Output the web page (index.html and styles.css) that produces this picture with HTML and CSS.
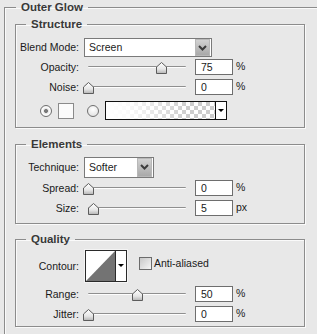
FILE: index.html
```html
<!DOCTYPE html>
<html lang="en">
<head>
  <meta charset="UTF-8" />
  <title>Outer Glow</title>
  <link rel="stylesheet" href="styles.css">
</head>
<body>
  <svg class="defs" width="0" height="0">
    <defs>
      <linearGradient id="thumbFill" x1="0" y1="0" x2="0" y2="1">
        <stop offset="0" stop-color="#ffffff" />
        <stop offset="0.6" stop-color="#e6e6e6" />
        <stop offset="1" stop-color="#b4b4b4" />
      </linearGradient>
      <symbol id="thumb" viewBox="0 0 11 12">
        <polygon points="0.5,5 5.5,0.5 10.5,5 10.5,11.5 0.5,11.5" fill="url(#thumbFill)" stroke="#5c5c5c" stroke-width="1" stroke-linejoin="round" />
      </symbol>
      <symbol id="chevron" viewBox="0 0 15 17">
        <path d="M4 7 L7.5 10.5 L11 7" fill="none" stroke="#3c3c3c" stroke-width="2" />
      </symbol>
    </defs>
  </svg>

  <fieldset class="panel">
    <legend>Outer Glow</legend>

    <fieldset class="group structure">
      <legend>Structure</legend>
      <div class="row first">
        <span class="label">Blend Mode:</span>
        <div class="select blend">
          <span class="select-text">Screen</span>
          <span class="select-btn"><svg width="15" height="17"><use href="#chevron" /></svg></span>
        </div>
      </div>
      <div class="row">
        <span class="label">Opacity:</span>
        <div class="slider">
          <div class="track"></div>
          <svg class="thumb" width="11" height="12" style="left: 73px"><use href="#thumb" /></svg>
        </div>
        <div class="num">75</div>
        <span class="unit">%</span>
      </div>
      <div class="row">
        <span class="label">Noise:</span>
        <div class="slider">
          <div class="track"></div>
          <svg class="thumb" width="11" height="12" style="left: 0px"><use href="#thumb" /></svg>
        </div>
        <div class="num">0</div>
        <span class="unit">%</span>
      </div>
      <div class="row colors">
        <span class="radio checked"></span>
        <span class="swatch"></span>
        <span class="radio second"></span>
        <div class="gradient">
          <span class="gradient-fill"></span>
          <span class="drop"></span>
        </div>
      </div>
    </fieldset>

    <fieldset class="group elements">
      <legend>Elements</legend>
      <div class="row first tall">
        <span class="label">Technique:</span>
        <div class="select technique">
          <span class="select-text">Softer</span>
          <span class="select-btn"><svg width="15" height="17"><use href="#chevron" /></svg></span>
        </div>
      </div>
      <div class="row">
        <span class="label">Spread:</span>
        <div class="slider">
          <div class="track"></div>
          <svg class="thumb" width="11" height="12" style="left: 0px"><use href="#thumb" /></svg>
        </div>
        <div class="num">0</div>
        <span class="unit">%</span>
      </div>
      <div class="row">
        <span class="label">Size:</span>
        <div class="slider">
          <div class="track"></div>
          <svg class="thumb" width="11" height="12" style="left: 5px"><use href="#thumb" /></svg>
        </div>
        <div class="num">5</div>
        <span class="unit">px</span>
      </div>
    </fieldset>

    <fieldset class="group quality">
      <legend>Quality</legend>
      <div class="row contour-row">
        <span class="label">Contour:</span>
        <div class="contour">
          <svg class="curve" width="29" height="30" viewBox="0 0 29 30">
            <rect width="29" height="30" fill="#fff" />
            <polygon points="0,30 29,0 29,30" fill="#737373" />
          </svg>
          <span class="drop"></span>
        </div>
        <label class="check"><span class="box"></span>Anti-aliased</label>
      </div>
      <div class="row">
        <span class="label">Range:</span>
        <div class="slider">
          <div class="track"></div>
          <svg class="thumb" width="11" height="12" style="left: 49px"><use href="#thumb" /></svg>
        </div>
        <div class="num">50</div>
        <span class="unit">%</span>
      </div>
      <div class="row">
        <span class="label">Jitter:</span>
        <div class="slider">
          <div class="track"></div>
          <svg class="thumb" width="11" height="12" style="left: 0px"><use href="#thumb" /></svg>
        </div>
        <div class="num">0</div>
        <span class="unit">%</span>
      </div>
    </fieldset>
  </fieldset>
</body>
</html>
```

FILE: styles.css
```css
html, body {
  margin: 0;
  overflow: hidden;
}
body {
  width: 317px;
  height: 334px;
  background: #e8e8e8;
  font-family: "Liberation Sans", Arial, sans-serif;
  font-size: 10.5px;
  color: #1a1a1a;
}
.defs {
  display: block;
  width: 0;
  height: 0;
}

fieldset {
  margin: 0;
  padding: 0;
  min-width: 0;
  border: 1px solid #8c8c8c;
  box-shadow: inset 1px 1px 0 #fafafa, 1px 1px 0 #fafafa;
}
legend {
  padding: 0 5px;
  font-size: 11.5px;
  font-weight: bold;
  line-height: 13px;
  color: #383838;
}

/* outer frame runs off the right and bottom of the dialog crop */
.panel {
  margin: 1px 0 0 4px;
  width: 313px;
  height: 333px;
  box-sizing: border-box;
  border-right: none;
  border-bottom: none;
  box-shadow: inset 1px 1px 0 #fafafa;
}
.panel > legend {
  margin-left: 11px;
}

.group {
  margin-left: 10px;
  width: 290px;
  box-sizing: border-box;
}
.group > legend {
  margin-left: 10px;
}
.structure {
  margin-top: 4px;
  padding-bottom: 7px;
}
.elements {
  margin-top: 10px;
  padding-bottom: 5px;
}
.quality {
  margin-top: 9px;
  padding-bottom: 2px;
}

.row {
  display: flex;
  align-items: center;
  height: 20px;
}
.row.first {
  margin-top: 6px;
}
.row.tall {
  height: 22px;
  margin-top: 5px;
}
.label {
  width: 63px;
  margin-right: 5px;
  text-align: right;
  white-space: nowrap;
}

/* dropdowns */
.select {
  display: flex;
  align-items: center;
  justify-content: space-between;
  box-sizing: border-box;
  background: #fff;
  border: 1px solid #7a7a7a;
  padding: 0 1px 0 4px;
}
.blend {
  width: 128px;
  height: 19px;
}
.technique {
  width: 70px;
  height: 21px;
}
.select-btn {
  display: block;
  width: 15px;
  height: 17px;
  box-sizing: border-box;
  border: 1px solid #b8b8b8;
  background: linear-gradient(#d2d2d2, #a9a9a9);
}
.technique .select-btn {
  height: 19px;
}
.select-btn svg {
  display: block;
  margin: -1px 0 0 -1px;
}

/* sliders */
.slider {
  position: relative;
  width: 108px;
  height: 16px;
  margin-left: -1px;
}
.track {
  margin: 7px 0 0 5px;
  width: 98px;
  height: 1px;
  border-top: 1px solid #8f8f8f;
  border-radius: 1px;
  background: #fdfdfd;
}
.thumb {
  position: absolute;
  top: 3px;
  display: block;
}
.num {
  margin-left: 4px;
  width: 38px;
  height: 16px;
  box-sizing: border-box;
  padding-left: 5px;
  border: 1px solid #6e6e6e;
  background: #fff;
  line-height: 14px;
}
.unit {
  margin: -3px 0 0 3px;
}

/* colour choice */
.colors {
  height: 19px;
  margin-top: 4px;
}
.radio {
  width: 12px;
  height: 12px;
  box-sizing: border-box;
  border: 1px solid #6f6f6f;
  border-radius: 50%;
  background: radial-gradient(circle at 50% 35%, #ffffff, #dcdcdc);
  margin-left: 24px;
}
.radio.checked {
  background: radial-gradient(circle, #7a7a7a 0 1.6px, #e6e6e6 2.3px, #fff 4px, #dadada);
}
.radio.second {
  margin-left: 13px;
}
.swatch {
  margin-left: 6px;
  width: 16px;
  height: 16px;
  box-sizing: border-box;
  border: 1px solid #8a8a8a;
  background: #fbfbfb;
}
.gradient {
  display: flex;
  margin-left: 6px;
  width: 122px;
  height: 19px;
  box-sizing: border-box;
  border: 1px solid #111;
}
.gradient-fill {
  flex: 1;
  border-right: 1px solid #111;
  background:
    linear-gradient(to right, #fff 0%, rgba(255, 255, 255, 0.9) 20%, rgba(255, 255, 255, 0) 75%),
    conic-gradient(#cdcdcd 25%, #fff 0 50%, #cdcdcd 0 75%, #fff 0) 0 0 / 8px 8px;
}
.drop {
  position: relative;
  width: 10px;
  background: #fff;
}
.drop::after {
  content: "";
  position: absolute;
  left: 2px;
  top: 50%;
  margin-top: -2px;
  border-left: 3px solid transparent;
  border-right: 3px solid transparent;
  border-top: 3px solid #000;
}

/* quality */
.contour-row {
  height: 32px;
  margin-top: 4px;
}
.contour-row + .row {
  margin-top: 2px;
}
.contour {
  display: flex;
  margin-left: 1px;
  width: 42px;
  height: 32px;
  box-sizing: border-box;
  border: 1px solid #2a2a2a;
  box-shadow: 0 0 0 1px #f4f4f4;
}
.curve {
  display: block;
  border-right: 1px solid #2a2a2a;
}
.check {
  display: flex;
  align-items: center;
  margin: 0 0 6px 12px;
}
.box {
  width: 13px;
  height: 13px;
  box-sizing: border-box;
  border: 1px solid #6c6c6c;
  background: linear-gradient(135deg, #c8c8c8, #f6f6f6);
  margin-right: 2px;
}
```
